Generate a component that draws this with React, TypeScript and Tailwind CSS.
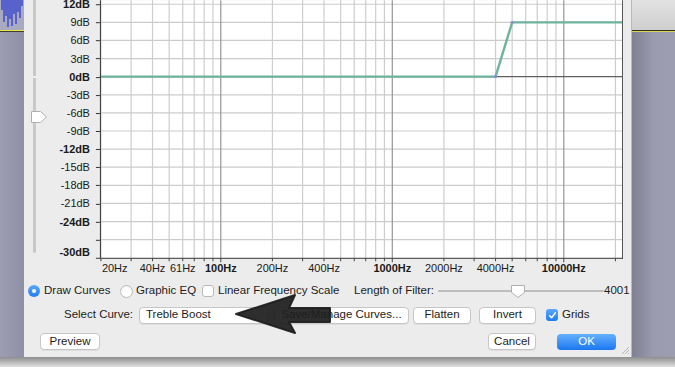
const FONT = "font-['Liberation_Sans',Arial,sans-serif]";

const fx = (f: number) => 101 + Math.log10(f / 20) * 171.8;
const dy = (db: number) => 4 + ((12 - db) / 3) * 18.14;

const freqs: number[] = [];
for (const dec of [10, 100, 1000, 10000]) {
  for (let m = 1; m <= 9; m++) {
    const f = dec * m;
    if (f >= 20 && f <= 22050) freqs.push(f);
  }
}
const majors = [100, 1000, 10000];
const dbs: number[] = [];
for (let d = 12; d >= -30; d -= 3) dbs.push(d);

const dbLabels: { db: number; text: string; bold?: boolean; y?: number }[] = [
  { db: 12, text: "12dB", bold: true, y: 7.5 },
  { db: 9, text: "9dB" },
  { db: 6, text: "6dB" },
  { db: 3, text: "3dB" },
  { db: 0, text: "0dB", bold: true },
  { db: -3, text: "-3dB" },
  { db: -6, text: "-6dB" },
  { db: -9, text: "-9dB" },
  { db: -12, text: "-12dB", bold: true },
  { db: -15, text: "-15dB" },
  { db: -18, text: "-18dB" },
  { db: -21, text: "-21dB" },
  { db: -24, text: "-24dB", bold: true },
  { db: -30, text: "-30dB", bold: true, y: 256 },
];

const hzLabels: { f: number; text: string; bold?: boolean }[] = [
  { f: 40, text: "40Hz" },
  { f: 60, text: "61Hz" },
  { f: 100, text: "100Hz", bold: true },
  { f: 200, text: "200Hz" },
  { f: 400, text: "400Hz" },
  { f: 1000, text: "1000Hz", bold: true },
  { f: 2000, text: "2000Hz" },
  { f: 4000, text: "4000Hz" },
  { f: 10000, text: "10000Hz", bold: true },
];

function Chart() {
  const bottom = 258.5;
  return (
    <svg width={584} height={279} viewBox="48 0 584 279" className="block">
      <rect x={100} y={0} width={524} height={bottom} fill="#ffffff" />
      {dbs.slice(0, -1).map((d) => (
        <line key={d} x1={100} x2={624} y1={dy(d)} y2={dy(d)} stroke="#cbcbcb" strokeWidth={1.2} />
      ))}
      {freqs.map((f) => (
        <line
          key={f}
          x1={fx(f)}
          x2={fx(f)}
          y1={0}
          y2={bottom}
          stroke={majors.includes(f) ? "#959595" : "#cdcdcd"}
          strokeWidth={1.2}
        />
      ))}
      <line x1={100} x2={624} y1={dy(0)} y2={dy(0)} stroke="#4a4a4a" strokeWidth={1} />
      <polyline
        points={`100,${dy(0)} ${fx(4000)},${dy(0)} ${fx(5000)},${dy(9)} 624,${dy(9)}`}
        fill="none"
        stroke="#6fb39e"
        strokeWidth={2.4}
        strokeLinejoin="round"
      />
      <rect x={fx(4000) - 1.5} y={dy(0) - 1} width={3} height={2} fill="#8a86d6" />
      <rect x={fx(5000) - 1.5} y={dy(9) - 1} width={3} height={2} fill="#8a86d6" />
      <line x1={100.5} x2={100.5} y1={0} y2={bottom} stroke="#333" />
      <line x1={623.5} x2={623.5} y1={0} y2={bottom} stroke="#555" />
      <line x1={100} x2={624} y1={bottom} y2={bottom} stroke="#333" />
      {dbs.map((d) => (
        <line key={d} x1={96} x2={100} y1={Math.round(dy(d)) + 0.5} y2={Math.round(dy(d)) + 0.5} stroke="#333" />
      ))}
      {freqs.map((f) => (
        <line key={f} x1={fx(f)} x2={fx(f)} y1={bottom} y2={bottom + (majors.includes(f) ? 4 : 3)} stroke="#444" />
      ))}
      <g fontFamily="'Liberation Sans', Arial, sans-serif" fontSize={11} fill="#1a1a1a">
        {dbLabels.map((l) => (
          <text key={l.text} x={90} y={l.y ?? dy(l.db) + 4} textAnchor="end" fontWeight={l.bold ? 700 : 400}>
            {l.text}
          </text>
        ))}
        <text x={102} y={272}>20Hz</text>
        {hzLabels.map((l) => (
          <text key={l.text} x={fx(l.f)} y={272} textAnchor="middle" fontWeight={l.bold ? 700 : 400}>
            {l.text}
          </text>
        ))}
      </g>
    </svg>
  );
}

function Radio({ on }: { on?: boolean }) {
  return on ? (
    <span className="flex h-[12px] w-[12px] shrink-0 items-center justify-center rounded-full bg-gradient-to-b from-[#5aa7fb] to-[#1f7cf0]">
      <span className="block h-[4px] w-[4px] rounded-full bg-white" />
    </span>
  ) : (
    <span className="block h-[13px] w-[13px] shrink-0 rounded-full border border-[#b9b9b9] bg-white shadow-[inset_0_1px_1px_rgba(0,0,0,0.06)]" />
  );
}

function Check({ on }: { on?: boolean }) {
  return on ? (
    <span className="flex h-[12px] w-[12px] shrink-0 items-center justify-center rounded-[3px] bg-gradient-to-b from-[#5aa7fb] to-[#1f7cf0]">
      <svg width="9" height="9" viewBox="0 0 9 9">
        <path d="M1.6 4.8 L3.6 6.8 L7.4 1.8" fill="none" stroke="#fff" strokeWidth="1.5" strokeLinecap="round" strokeLinejoin="round" />
      </svg>
    </span>
  ) : (
    <span className="block h-[12px] w-[12px] shrink-0 rounded-[3px] border border-[#b9b9b9] bg-white" />
  );
}

function Btn({ children, className }: { children: React.ReactNode; className: string }) {
  return (
    <div
      className={`flex h-[17px] shrink-0 items-center justify-center rounded-[4px] border border-[#c6c6c6] bg-white text-[11.5px] text-[#1c1c1c] shadow-[0_1px_0_rgba(0,0,0,0.06)] ${className}`}
    >
      {children}
    </div>
  );
}

function Dialog() {
  return (
    <div className="relative flex w-[608px] shrink-0 flex-col border-r border-[#b9b9b9] bg-[#ececec] text-[11.5px] text-[#1c1c1c]">
      <div className="flex h-[279px]">
        <div className="relative w-[24px] shrink-0">
          <div className="absolute left-[9px] top-0 h-[253px] w-[3px] rounded-b bg-[#c8c8c8]" />
          <div className="absolute left-[9px] top-[76px] h-[2px] w-[3px] bg-[#efefef]" />
          <svg className="absolute left-[6px] top-[110px]" width="18" height="14" viewBox="0 0 18 14">
            <path d="M1.5 1.5 H10.5 L16.5 7 L10.5 12.5 H1.5 Z" fill="#fff" stroke="#b0b0b0" strokeLinejoin="round" />
          </svg>
        </div>
        <Chart />
      </div>

      <div className="flex h-[24px] items-center whitespace-nowrap pl-[4px]">
        <Radio on />
        <span className="ml-[4px] w-[66px]">Draw Curves</span>
        <span className="ml-[10px]">
          <Radio />
        </span>
        <span className="ml-[3px] w-[62px]">Graphic EQ</span>
        <span className="ml-[4px]">
          <Check />
        </span>
        <span className="ml-[4px] w-[126px]">Linear Frequency Scale</span>
        <span className="ml-[10px] w-[82px]">Length of Filter:</span>
        <div className="relative h-full w-[168px]">
          <div className="absolute left-[2px] right-0 top-[11px] h-[2px] rounded bg-[#bdbdbd]" />
          <svg className="absolute left-[74px] top-[5px]" width="16" height="15" viewBox="0 0 16 15">
            <path d="M1.5 1.5 H14.5 V8.5 L8 13.5 L1.5 8.5 Z" fill="#fff" stroke="#b0b0b0" strokeLinejoin="round" />
          </svg>
        </div>
        <span>4001</span>
      </div>

      <div className="flex h-[24px] items-center whitespace-nowrap">
        <span className="w-[109px] text-right">Select Curve:</span>
        <div className="ml-[6px] flex h-[17px] w-[129px] items-center rounded-[4px] border border-[#c6c6c6] bg-white pl-[6px] shadow-[0_1px_0_rgba(0,0,0,0.06)]">
          Treble Boost
        </div>
        <Btn className="ml-[6px] w-[135px]">Save/Manage Curves...</Btn>
        <Btn className="ml-[4px] w-[58px]">Flatten</Btn>
        <Btn className="ml-[8px] w-[57px]">Invert</Btn>
        <span className="ml-[10px]">
          <Check on />
        </span>
        <span className="ml-[4px]">Grids</span>
      </div>

      <div className="flex flex-1 items-center pb-[1px]">
        <Btn className="ml-[16px] w-[60px]">Preview</Btn>
        <Btn className="ml-auto w-[48px]">Cancel</Btn>
        <div className="ml-[21px] mr-[15px] flex h-[16px] w-[59px] items-center justify-center rounded-[4px] bg-gradient-to-b from-[#63b0fd] to-[#1877f0] text-[11.5px] text-white">
          OK
        </div>
      </div>

      <svg className="absolute bottom-[2px] right-[1px]" width="10" height="10" viewBox="0 0 10 10">
        <path d="M9 2 L2 9 M9 5 L5 9 M9 8 L8 9" stroke="#a8a8a8" strokeWidth="0.8" />
      </svg>
    </div>
  );
}

function LeftBackdrop() {
  const spikes = [
    [2, 10], [4, 22], [6, 16], [8, 27], [10, 19], [12, 26], [14, 14], [16, 24], [18, 12], [20, 18], [22, 6],
  ];
  return (
    <div className="flex w-[24px] shrink-0 flex-col">
      <div className="h-[30px] bg-[#a9aac0]">
        <svg width="24" height="30">
          {spikes.map(([x, h]) => (
            <line key={x} x1={x} x2={x} y1={0} y2={h} stroke="#4351cf" strokeWidth={1.6} />
          ))}
        </svg>
      </div>
      <div className="h-[1px] bg-[#e9e34d]" />
      <div className="h-[1px] bg-[#3c3c32]" />
      <div className="flex-1 bg-gradient-to-r from-[#9d9db2] to-[#8f90a6]" />
    </div>
  );
}

function RightBackdrop() {
  return (
    <div className="flex flex-1 flex-col">
      <div className="h-[30px] bg-gradient-to-b from-[#e2e2e2] to-[#cfcfcf]" />
      <div className="h-[1px] bg-[#2f2f20]" />
      <div className="h-[1px] bg-[#d9d35a]" />
      <div className="flex-1 bg-gradient-to-r from-[#7f8092] via-[#9a9bae] to-[#9c9db1]" />
    </div>
  );
}

export default function App() {
  return (
    <div className={`relative flex h-[367px] w-[675px] flex-col overflow-hidden bg-[#dcdcdc] ${FONT}`}>
      <div className="flex h-[357px]">
        <LeftBackdrop />
        <Dialog />
        <RightBackdrop />
      </div>
      <div className="h-[10px] bg-gradient-to-b from-[#8e8e8e] to-[#e0e0e0]" />
      <svg className="pointer-events-none absolute left-0 top-0" width="675" height="367">
        <path
          d="M236 314 L295 295 L289 308 L330 308 L330 322 L289 322 L295 333 Z"
          fill="#1e1e1e"
          fillOpacity={0.93}
          stroke="#1e1e1e"
          strokeOpacity={0.93}
          strokeWidth={2}
          strokeLinejoin="round"
        />
      </svg>
    </div>
  );
}
